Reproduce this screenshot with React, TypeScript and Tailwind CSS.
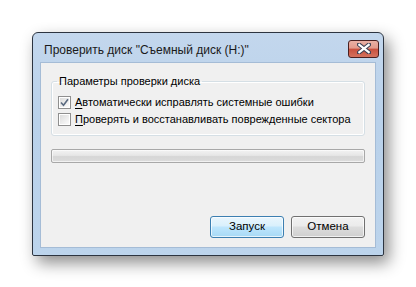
function CloseGlyph() {
  return (
    <svg width="14" height="11" viewBox="0 0 14 11" className="block">
      <path
        d="M2 1.5 L12 9.5 M12 1.5 L2 9.5"
        stroke="#3b3f52"
        strokeWidth="4.2"
        strokeLinecap="square"
      />
      <path
        d="M2.3 1.8 L11.7 9.2 M11.7 1.8 L2.3 9.2"
        stroke="#ffffff"
        strokeWidth="2.2"
        strokeLinecap="square"
      />
    </svg>
  )
}

function Checkbox({ checked }: { checked?: boolean }) {
  return (
    <span className="w-[13px] h-[13px] shrink-0 border border-[#8f8f8f] bg-white p-px flex">
      <span className="flex-1 bg-gradient-to-br from-[#dcdcdc] to-[#fbfbfb] flex items-center justify-center">
        {checked && (
          <svg width="9" height="9" viewBox="0 0 9 9">
            <path d="M1 4.5 L3.5 7.2 L8 1.2" stroke="#5a6a80" strokeWidth="1.6" fill="none" />
          </svg>
        )}
      </span>
    </span>
  )
}

function CheckRow({ first, rest, checked }: { first: string; rest: string; checked?: boolean }) {
  return (
    <label className="flex items-center gap-[4px] h-[17px] whitespace-nowrap">
      <Checkbox checked={checked} />
      <span>
        <span className="underline underline-offset-[2px]">{first}</span>
        {rest}
      </span>
    </label>
  )
}

function WinButton({ label, primary }: { label: string; primary?: boolean }) {
  return (
    <button
      className={`w-[74px] h-[22px] rounded-[3px] border text-[11.5px] leading-none text-black shadow-[inset_0_0_0_1px_rgba(255,255,255,0.7)] ${
        primary
          ? "border-[#3c7fb1] bg-[linear-gradient(#eaf6fd_0%,#d9f0fc_45%,#bee6fd_50%,#a7d9f5_100%)]"
          : "border-[#707070] bg-[linear-gradient(#f2f2f2_0%,#ebebeb_45%,#dddddd_50%,#cfcfcf_100%)]"
      }`}
    >
      {label}
    </button>
  )
}

export default function App() {
  return (
    <div
      className="w-[416px] h-[287px] bg-white pt-[32px] pl-[32px] overflow-hidden"
      style={{ fontFamily: '"Liberation Sans", Arial, sans-serif' }}
    >
      <div className="w-[352px] h-[224px] rounded-t-[6px] rounded-b-[2px] border border-[#2c3440] bg-[linear-gradient(#c3d7ed,#b9d1ea_40%,#bcd4ec)] shadow-[5px_7px_16px_rgba(0,0,0,0.45)] flex flex-col px-[7px] pb-[7px]">
        <div className="h-[29px] flex items-center justify-between">
          <span className="text-[12px] text-[#1a1a1a] pl-[4px] pt-[4px] whitespace-nowrap">
            Проверить диск "Съемный диск (H:)"
          </span>
          <span className="w-[31px] h-[18px] mt-[2px] -mr-[3px] rounded-[3px] border border-[#4a2020] bg-[linear-gradient(#eab0a4_0%,#e39a8c_45%,#c9503e_50%,#d4725e_100%)] flex items-center justify-center">
            <CloseGlyph />
          </span>
        </div>
        <div className="flex-1 bg-[#f0f0f0] border border-[#a5bcd6] text-[11px] text-black flex flex-col px-[10px]">
          <fieldset className="mt-[11px] h-[62px] border border-[#d5dfe5] rounded-[3px] shadow-[inset_0_0_0_1px_#ffffff] px-[6px] pb-[4px] pt-0 min-w-0">
            <legend className="px-[2px] -ml-[1px] leading-[14px] whitespace-nowrap">Параметры проверки диска</legend>
            <div className="flex flex-col mt-[6px]">
              <CheckRow checked first="А" rest="втоматически исправлять системные ошибки" />
              <CheckRow first="П" rest="роверять и восстанавливать поврежденные сектора" />
            </div>
          </fieldset>
          <div className="mt-[13px] h-[14px] rounded-[2px] border border-[#a8a8a8] bg-[linear-gradient(#f3f3f3_0%,#e6e6e6_45%,#d6d6d6_55%,#dcdcdc_100%)] shadow-[inset_0_0_0_1px_rgba(255,255,255,0.6)]" />
          <div className="mt-auto mb-[9px] flex justify-end gap-[7px]">
            <WinButton primary label="Запуск" />
            <WinButton label="Отмена" />
          </div>
        </div>
      </div>
    </div>
  )
}
